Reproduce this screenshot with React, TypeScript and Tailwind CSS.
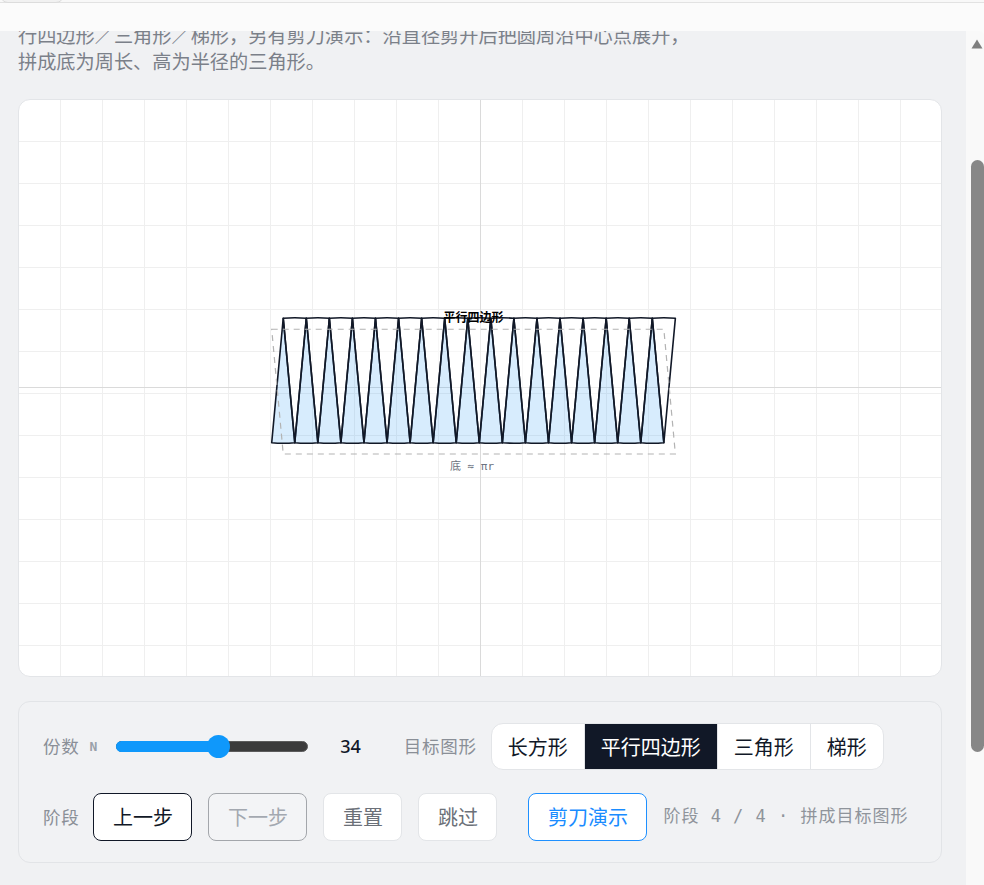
import { useLayoutEffect, useRef } from "react";

const R = 125;
const N = 34;
const HALF = R * Math.sin(Math.PI / N);
const CHORD = HALF * 2;
const H = R * Math.cos(Math.PI / N);
const X0 = 252.7;
const YB = 342.7;
const YT = YB - H;
const CX = X0 + (CHORD * (N / 2) + HALF) / 2;

function buildPieces() {
  const ups: string[] = [];
  const downs: string[] = [];
  for (let i = 0; i < N / 2; i++) {
    const l = X0 + i * CHORD;
    ups.push(`M${l} ${YB} L${l + HALF} ${YT} L${l + CHORD} ${YB} A${R} ${R} 0 0 1 ${l} ${YB} Z`);
    const t = X0 + HALF + i * CHORD;
    downs.push(`M${t} ${YT} L${t + HALF} ${YB} L${t + CHORD} ${YT} A${R} ${R} 0 0 0 ${t} ${YT} Z`);
  }
  return { ups, downs };
}

function Board() {
  const { ups, downs } = buildPieces();
  const cols = Array.from({ length: 21 }, (_, k) => 41.5 + 42 * k);
  const rows = Array.from({ length: 13 }, (_, k) => 41.5 + 42 * k);
  const top = YT + 11;
  const bot = YB + 11.3;
  const right = X0 + CHORD * (N / 2);

  return (
    <svg className="block" width={922} height={576} viewBox="0 0 922 576">
      {cols.map((x) => (
        <line key={"c" + x} x1={x} y1={0} x2={x} y2={576} stroke="#efefef" strokeWidth={1} />
      ))}
      {rows.map((y) => (
        <line key={"r" + y} x1={0} y1={y} x2={922} y2={y} stroke="#efefef" strokeWidth={1} />
      ))}
      <line x1={461.5} y1={0} x2={461.5} y2={576} stroke="#dadada" strokeWidth={1} />
      <line x1={0} y1={287.5} x2={922} y2={287.5} stroke="#dadada" strokeWidth={1} />

      {downs.map((d, i) => (
        <path key={"d" + i} d={d} fill="#ffffff" fillOpacity={0.5} stroke="#111827" strokeWidth={1.6} strokeLinejoin="round" />
      ))}
      {ups.map((d, i) => (
        <path key={"u" + i} d={d} fill="#38a0f5" fillOpacity={0.2} stroke="#111827" strokeWidth={1.6} strokeLinejoin="round" />
      ))}

      <polygon
        points={`${X0},${top} ${right},${top} ${right + HALF},${bot} ${X0 + HALF},${bot}`}
        fill="none"
        stroke="#b3b3b3"
        strokeWidth={1.2}
        strokeDasharray="6 5"
      />

      <text
        x={CX}
        y={YT + 0.5}
        textAnchor="middle"
        dominantBaseline="middle"
        fontSize={12}
        fontWeight={700}
        fill="#000"
        className="font-['Noto_Sans_CJK_SC',sans-serif]"
      >
        平行四边形
      </text>
      <text
        x={CX - 1.5}
        y={366.5}
        textAnchor="middle"
        dominantBaseline="middle"
        fontSize={11}
        fill="#6b7280"
        className="font-['DejaVu_Sans_Mono','Noto_Sans_CJK_SC',monospace]"
      >
        底 ≈ πr
      </text>
    </svg>
  );
}

function Slider() {
  return (
    <div className="relative w-[192px] h-[11px] rounded-full bg-[#3b3b3b] border border-[#5c5c5c]">
      <div className="absolute left-[-1px] top-[-1px] h-[11px] w-[103px] rounded-full bg-[#0f98fb]" />
      <div className="absolute left-[90px] top-[-7px] w-[23px] h-[23px] rounded-full bg-[#0f98fb]" />
    </div>
  );
}

const shapes = ["长方形", "平行四边形", "三角形", "梯形"];

export default function App() {
  const scrollRef = useRef<HTMLDivElement>(null);
  const boardRef = useRef<HTMLDivElement>(null);

  useLayoutEffect(() => {
    if (scrollRef.current && boardRef.current) {
      scrollRef.current.scrollTop = boardRef.current.offsetTop - 68;
    }
  }, []);

  return (
    <div className="h-screen flex flex-col bg-[#fbfbfb] font-['Noto_Sans_CJK_SC','Noto_Sans',sans-serif]">
      {/* top bar */}
      <div className="h-[31px] shrink-0 bg-[#fbfbfb]">
        <div className="h-[13px] border-b border-[#e2e2e2] bg-[#f8f8f8]">
          <div className="-mt-[10px] h-[13px] w-[64px] rounded-b-lg border border-[#dcdcdc] bg-[#f1f1f1]" />
        </div>
      </div>

      <div className="flex-1 min-h-0 flex">
        <div ref={scrollRef} className="relative flex-1 min-w-0 overflow-y-auto [scrollbar-width:none] bg-[#f0f1f3]">
          <div className="pl-[18px] pr-[24px] pt-6 pb-6">
            <h1 className="text-[28px] leading-[40px] font-bold text-[#111827] mb-3">圆的面积 · 切拼演示</h1>
            <div className="flex gap-2 h-[28px] mb-6">
              <span className="px-3 rounded-full bg-white border border-[#e5e7eb] text-[14px] leading-[26px] text-[#6b7280]">六年级 · 圆</span>
              <span className="px-3 rounded-full bg-white border border-[#e5e7eb] text-[14px] leading-[26px] text-[#6b7280]">交互实验</span>
            </div>
            <p className="text-[19.2px] leading-[26px] text-[#7b8089] mb-[25px]">
              把圆平均分成 N 份（扇形），交替拼接，可以拼成近似的长方形／平
              <br />
              行四边形／三角形／梯形，另有剪刀演示：沿直径剪开后把圆周沿中心点展开，
              <br />
              拼成底为周长、高为半径的三角形。
            </p>

            <div ref={boardRef} className="rounded-xl border border-[#e3e5e8] bg-white overflow-hidden">
              <Board />
            </div>

            <div className="mt-6 rounded-xl border border-[#e2e4e7] bg-[#f1f2f4] pl-6 pr-6 py-[21px] flex flex-col gap-[23px]">
              <div className="flex items-center h-[47px]">
                <span className="text-[17.5px] text-[#8a8f97] tracking-[0.04em]">份数</span>
                <span className="ml-[10px] font-['DejaVu_Sans_Mono',monospace] text-[13px] font-bold text-[#9aa1aa]">N</span>
                <div className="ml-[19px]">
                  <Slider />
                </div>
                <span className="ml-[32px] text-[18px] font-medium text-[#111827] font-['Noto_Sans',sans-serif]">34</span>
                <span className="ml-[43px] text-[17.5px] text-[#8a8f97] tracking-[0.04em]">目标图形</span>
                <div className="ml-[14px] flex h-[47px] rounded-xl border border-[#e3e5e8] bg-white overflow-hidden">
                  {shapes.map((s, i) => (
                    <div
                      key={s}
                      className={
                        "px-4 flex items-center text-[20px] " +
                        (i > 0 ? "border-l border-[#e3e5e8] " : "") +
                        (i === 1 ? "bg-[#111827] text-white" : "text-[#111827]")
                      }
                    >
                      {s}
                    </div>
                  ))}
                </div>
              </div>

              <div className="flex items-center h-[48px]">
                <span className="text-[17.5px] text-[#8a8f97] tracking-[0.04em]">阶段</span>
                <div className="ml-[14px] flex gap-4">
                  <button className="h-[48px] px-[18.5px] rounded-lg border border-[#111827] bg-white text-[20px] text-[#111827]">上一步</button>
                  <button disabled className="h-[48px] px-[18.5px] rounded-lg border border-[#a3a6ab] bg-[#f3f4f6] text-[20px] text-[#a3a8b0]">下一步</button>
                  <button className="h-[48px] px-[18.5px] rounded-lg border border-[#e3e5e8] bg-white text-[20px] text-[#6b7078]">重置</button>
                  <button className="h-[48px] px-[18.5px] rounded-lg border border-[#e3e5e8] bg-white text-[20px] text-[#6b7078]">跳过</button>
                </div>
                <button className="ml-[31px] h-[48px] px-[18.5px] rounded-lg border border-[#1e90ff] bg-white text-[20px] text-[#1a8cff]">剪刀演示</button>
                <span className="ml-4 text-[17px] tracking-[1px] text-[#8f949b] font-['DejaVu_Sans_Mono','Noto_Sans_CJK_SC',monospace]">
                  阶段 4 / 4 · 拼成目标图形
                </span>
              </div>
            </div>

            <div className="mt-6 rounded-xl border border-[#e3e5e8] bg-white p-5 text-[16px] leading-[26px] text-[#6b7280]">
              <p className="font-bold text-[#111827]">推导思路</p>
              <p>圆的面积 S = 底 × 高 = πr × r = πr²。份数越多，拼成的图形越接近标准图形。</p>
              <p>拖动滑块改变份数，切换目标图形查看不同拼法。</p>
            </div>
          </div>
        </div>

        {/* scrollbar */}
        <div className="w-[18px] shrink-0 bg-[#f9f9f9] rounded-tr-[5px] flex flex-col">
          <svg className="mt-[8px] ml-[5px]" width={12} height={10} viewBox="0 0 12 10">
            <polygon points="6,0.5 11.5,9.5 0.5,9.5" fill="#7f7f7f" />
          </svg>
          <div className="mt-[111px] ml-[5px] w-[13px] h-[592px] rounded-full bg-[#878787]" />
        </div>
      </div>
    </div>
  );
}
